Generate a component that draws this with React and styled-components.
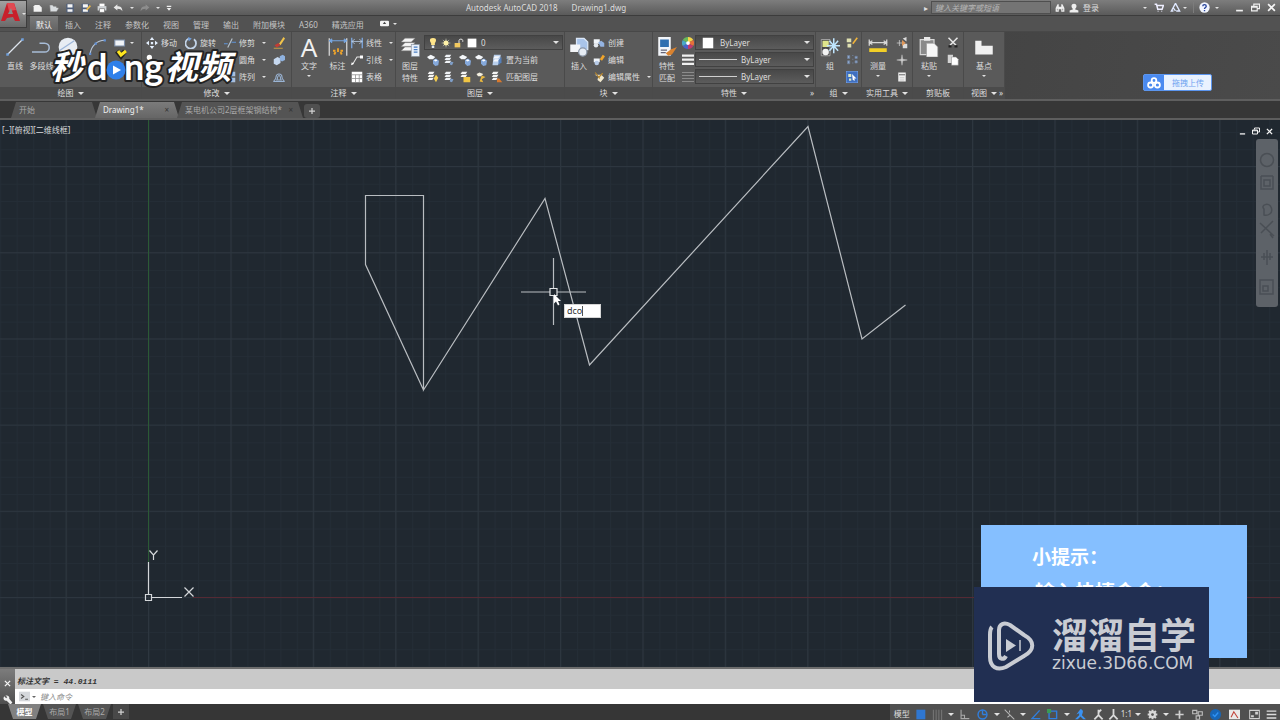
import React from "react";
import styled, { createGlobalStyle, css } from "styled-components";

// ICONS (16 x 16 box)
const glyphs = {
  newFile: <path d="M3 3h7l4 4v7H1V5z" fill="#f2f2f2" />,
  open: <path d="M1 3h5l1 2h5v2l4 1-4 6H2z" fill="#d9dde0" stroke="#777" />,
  save: (
    <>
      <rect x="2" y="1" width="12" height="14" rx="1" fill="#4f5f7b" />
      <path d="M4 2h8v5H4zM4 10h8v4H4z" fill="#f5f5f5" />
    </>
  ),
  saveAs: (
    <>
      <rect x="1" y="1" width="12" height="14" rx="1" fill="#4f5f7b" />
      <path d="M3 2h8v5H3zM3 10h8v4H3z" fill="#f5f5f5" />
      <path d="M8 10l6-7 2 2-6 7z" fill="#e9b84b" />
    </>
  ),
  print: (
    <>
      <path d="M4 1h8v5H4z" fill="#fff" />
      <path d="M1 5h14v7H1z" fill="#cfd3d6" />
      <path d="M4 9h8v6H4z" fill="#fff" stroke="#666" />
    </>
  ),
  undo: <path d="M1 7l6-5v3c5 0 8 2 8 8-2-3-4-4-8-4v3z" fill="#e6e6e6" />,
  redo: <path d="M15 7L9 2v3c-5 0-8 2-8 8 2-3 4-4 8-4v3z" fill="#8d8d8d" />,
  more: <path d="M2 2h12v3H2zM2 8h12l-6 7z" fill="#eee" />,
  find: <path d="M1 14V8l3-6h2v4h4V2h2l3 6v6h-5v-4H6v4zM3 9v3h1V9zm9 0v3h1V9z" fill="#eee" />,
  user: <path d="M8 1c3 0 4 2 4 4S10 9 9.500 10L15 12v3H1v-3l5.500-2C6 9 4 7 4 5s1-4 4-4z" fill="#eee" />,
  cart: (
    <path d="M1 2h3l2 8h7l2-6H5M6 13h1M12 13h1" fill="none" stroke="#eef" strokeWidth="2.400" />
  ),
  a360: <path d="M8 2L2 13h3M8 2l6 11H9M5 9l3 4" fill="none" stroke="#dfe8ff" strokeWidth="2" />,
  help: (
    <>
      <circle cx="8" cy="8" r="7.500" fill="#f2f6ff" />
      <path d="M5.500 6c0-3 5-3 5 0 0 2-2.500 2-2.500 4M8 11.500v2" fill="none" stroke="#26449a" strokeWidth="2" />
    </>
  ),
  minimize: <path d="M2 12h12v3H2z" fill="#f0f0f0" />,
  restore: (
    <path d="M5 5V2h10v8h-3M1 6h10v8H1zM1 7.500h10" fill="none" stroke="#f0f0f0" strokeWidth="2" />
  ),
  close: <path d="M2 2l12 12M14 2L2 14" stroke="#f5f5f5" strokeWidth="3" />,
  camera: (
    <>
      <rect x="0" y="3" width="16" height="10" rx="2" fill="#f2f2f2" />
      <path d="M5 9l3-4 3 4z" fill="#444" />
    </>
  ),
  line: (
    <>
      <path d="M2 14L14 2" stroke="#dfe6ee" />
      <path d="M1 14h2M13 2h2" stroke="#6fa0dd" strokeWidth="2" />
    </>
  ),
  polyline: (
    <path d="M1 12h9c5 0 5-7 0-7H7M0 12h2M6 5h2" fill="none" stroke="#a8bdd8" strokeWidth="1.200" />
  ),
  circle: (
    <>
      <circle cx="8" cy="8" r="7.500" fill="#e8edf3" />
      <path d="M1 11l12-8" stroke="#9db6da" />
    </>
  ),
  arc: (
    <>
      <path d="M1 14C2 7 7 2 14 2" fill="none" stroke="#b7c6d9" />
      <path d="M0 14h2M5 5h2M13 2h2" stroke="#5f8fd6" strokeWidth="2" />
    </>
  ),
  rect: <path d="M1 4h13v8H1z" fill="#f1f4f8" stroke="#7d8ea8" strokeWidth="1.500" />,
  move: (
    <path d="M8 0l3 4H5zM8 16l-3-4h6zM0 8l4-3v6zM16 8l-4 3V5zM6.500 6.500h3v3h-3z" fill="#e3eefc" />
  ),
  rotate: (
    <>
      <path d="M5 2a7 7 0 1 0 7 1" fill="none" stroke="#c3d4e8" strokeWidth="2.400" />
      <path d="M4 0l5 2-4 4z" fill="#6d9bd8" />
    </>
  ),
  trim: (
    <>
      <path d="M0 9h5M10 7h6" stroke="#5f94d8" strokeWidth="1.600" />
      <path d="M5 14L11 2" stroke="#b9c4cf" strokeWidth="1.400" />
    </>
  ),
  copy: (
    <>
      <circle cx="4.500" cy="4.500" r="3.500" fill="#fff" />
      <circle cx="11" cy="11" r="3.500" fill="#b9c9dc" />
    </>
  ),
  fillet: <path d="M2 2v5c0 4 3 7 7 7h5" fill="none" stroke="#aac5ea" strokeWidth="2" />,
  array: <path d="M1 1h6v6H1zM9 1h6v6H9zM1 9h6v6H1zM9 9h6v6H9z" fill="#a9bfdd" />,
  erase: (
    <>
      <path d="M8 9l6-9 2 2-6 9z" fill="#f1c44b" />
      <path d="M2 11l5-3 3 3-5 3z" fill="#c23d35" />
      <path d="M1 15h12" stroke="#e9b33f" />
    </>
  ),
  explode: (
    <>
      <path d="M1 7l5-3 4 2v6l-5 3-4-2z" fill="#c6d8ef" />
      <path d="M9 3l4-2 3 2v5l-4 2-3-2z" fill="#8fb2df" />
    </>
  ),
  offset: (
    <path d="M1 14c0-2 3-2 3-6a4 4 0 0 1 8 0c0 4 3 4 3 6zM5 12c2-2 0-6 3-6s1 4 3 6z" fill="none" stroke="#9ab4d4" strokeWidth="1.400" />
  ),
  dim: (
    <>
      <path d="M1 1v14M15 1v14" stroke="#d8d8d8" />
      <path d="M1 3h14M1 3l2-1.500v3zM15 3l-2-1.500v3z" stroke="#78a7e2" strokeWidth=".8" fill="#78a7e2" />
      <path d="M5 14l1-2M8 12V9M11 14l-1-2M4 11l2 0M12 11h-2" stroke="#f0a52b" strokeWidth="1.500" />
    </>
  ),
  linear: (
    <>
      <path d="M1 1v14M15 1v14" stroke="#7faeea" strokeWidth="1.600" />
      <path d="M1 6h14M5 3L1 6l4 3M11 3l4 3-4 3" fill="none" stroke="#bcd1ec" />
    </>
  ),
  leader: (
    <>
      <path d="M2 14L8 4h5" fill="none" stroke="#e6e6e6" strokeWidth="1.400" />
      <path d="M0 15l1-4 3 2zM12 2h4v4h-4z" fill="#fff" />
    </>
  ),
  table: (
    <>
      <rect x="1" y="1" width="14" height="14" fill="#fff" />
      <path d="M1 5h14M1 10h14M6 5v10M11 5v10" stroke="#8a8a8a" />
    </>
  ),
  layerProps: (
    <>
      <path d="M4 1h8L9 4H1zM4 4.500h8l-3 3H1zM4 8h8l-3 3H1z" fill="#f5f5f5" stroke="#888" strokeWidth=".4" />
      <rect x="9" y="6" width="6.500" height="9.500" fill="#e9f1fb" stroke="#8a94a3" strokeWidth=".5" />
      <path d="M11 8h3M11 10h3M11 12h3" stroke="#4a7fc4" />
    </>
  ),
  bulb: (
    <>
      <path d="M8 0c7 0 5 6 3 8v3H5V8C3 6 1 0 8 0z" fill="#ffe58a" />
      <path d="M6 12h4v4H6z" fill="#dfe6ee" />
    </>
  ),
  sun: (
    <>
      <path d="M8 1v14M1 8h14M3 3l10 10M13 3L3 13" stroke="#cfd3c0" />
      <circle cx="8" cy="8" r="4" fill="#fff2a8" />
    </>
  ),
  lock: (
    <>
      <rect x="1" y="8" width="9" height="7" fill="#f2c95f" />
      <path d="M8 8V4c0-3 6-3 6 0v2" fill="none" stroke="#e6e6e6" strokeWidth="1.600" />
    </>
  ),
  swatch: <path d="M1 1h14v14H1z" fill="#fff" />,
  layOff: (
    <>
      <path d="M0 4l5-3 6 3-3 3H3z" fill="#f5f8fb" />
      <path d="M8 8l4-2 4 3-1 6-4 1-3-3z" fill="#85a9dc" />
      <path d="M9 8l3-1 2 2-3 1z" fill="#fff" />
    </>
  ),
  layStack: (
    <>
      <path d="M4 1h7L9 4H2zM4 5h7L9 8H2zM4 9h7l-2 3H2z" fill="#f0f3f7" />
      <path d="M10 10l4 1-2 4-3-1z" fill="#7f9fc9" />
    </>
  ),
  layCurrent: (
    <>
      <path d="M4 1h9l-1 9-3 5H2l1-9z" fill="#b9cfec" />
      <path d="M5 3h7L9 6H3zM5 7h6l-2 3H3z" fill="#f6f8fb" />
      <path d="M10 8l4-4v7l-4 4z" fill="#557fb8" />
    </>
  ),
  layLock: (
    <>
      <path d="M4 1h7L9 4H2zM4 5h7L9 8H2z" fill="#f5f5f5" />
      <path d="M6 8h9v7H6z" fill="#f0c544" />
    </>
  ),
  layBulb: (
    <>
      <path d="M3 1h7L8 4H1zM3 5h7L8 8H1zM3 9h6l-2 3H1z" fill="#f5f5f5" />
      <path d="M12 5l3 4-3 6-3-5z" fill="#f6cf52" />
    </>
  ),
  layMatch: (
    <>
      <path d="M3 1h7L8 4H1zM3 5h7L8 8H1zM3 9h6l-2 3H1z" fill="#f5f5f5" />
      <path d="M8 10l3 0 4 5H8z" fill="#d97a2e" />
    </>
  ),
  layFreeze: (
    <>
      <path d="M2 4l4-2 5 2-3 3H4z" fill="#f3efe0" />
      <path d="M9 6l5 2-5 3 2 4-5-1z" fill="#e7b73f" />
    </>
  ),
  insert: (
    <>
      <path d="M6 1h6l3 3v6H6z" fill="#a9c4ea" stroke="#dbe7f7" />
      <path d="M1 6h8v6H1z" fill="#f3f5f8" />
      <circle cx="11" cy="12" r="3.300" fill="#e6ecf4" stroke="#8b97a8" />
    </>
  ),
  create: (
    <>
      <path d="M1 3h8v6H1z" fill="#f0f4f9" />
      <path d="M7 7l4-2 4 3v5h-5z" fill="#94b4e2" />
      <circle cx="4" cy="11" r="3" fill="#e4e9ef" />
    </>
  ),
  edit: (
    <>
      <path d="M1 6h8v5H1z" fill="#f0f4f9" />
      <circle cx="5" cy="12" r="3" fill="#b7cbe8" />
      <path d="M9 7l4-6 3 2-4 6z" fill="#f0a52b" />
    </>
  ),
  editAttr: (
    <>
      <path d="M2 5l5 2-1 5 4 3 5-6-4-4z" fill="#efe7cd" />
      <path d="M3 2l6 8M13 3l-6 6" stroke="#b8862b" strokeWidth="1.600" />
    </>
  ),
  matchProps: (
    <>
      <rect x="1" y="0" width="10" height="15" fill="#f2f5f9" />
      <rect x="2.500" y="2" width="7" height="6" fill="#2f6fb0" />
      <path d="M3 10.500h5M3 12.500h4" stroke="#667" />
      <path d="M7 13l4-3 5-2-4 6-3 1z" fill="#d9822f" />
    </>
  ),
  wheel: (
    <>
      <path d="M8 8V0a8 8 0 0 1 7 4z" fill="#f4d64a" />
      <path d="M8 8l7-4a8 8 0 0 1 0 8z" fill="#e8703a" />
      <path d="M8 8l7 4a8 8 0 0 1-7 4z" fill="#c1396f" />
      <path d="M8 8v8a8 8 0 0 1-7-4z" fill="#4a62c9" />
      <path d="M8 8l-7 4a8 8 0 0 1 0-8z" fill="#49a8c9" />
      <path d="M8 8L1 4a8 8 0 0 1 7-4z" fill="#68b85a" />
      <circle cx="8" cy="8" r="2.500" fill="#fff" />
    </>
  ),
  weights: <path d="M0 2h16M0 7.500h16M0 13h16" stroke="#f0f0f0" strokeWidth="3" />,
  types: <path d="M0 2h16M0 6h16M0 10h16M0 14h16" stroke="#8c8c8c" strokeWidth="1.500" />,
  group: (
    <>
      <path d="M1 2h7v13H1z" fill="#4a4a4a" stroke="#b9b9b9" strokeWidth=".6" />
      <rect x="2" y="3" width="5" height="5" fill="#dfe58c" />
      <circle cx="4.500" cy="12" r="2.600" fill="#f3f3f3" />
      <path d="M11 1v12M5.500 7h10.500M7.500 3l7 8M14.500 3l-7 8" stroke="#bfe6ff" strokeWidth="1.200" />
    </>
  ),
  ungroup: (
    <>
      <path d="M1 2h6v5H1zM2 9h5v5H2z" fill="#dfe0b0" />
      <path d="M9 9l6-8" stroke="#f0b43b" strokeWidth="2" />
    </>
  ),
  groupEdit: (
    <path d="M2 2h3v4H2zM2 9h3v4H2zM8 2h2M8 7h2M8 12h2M12 3h3v3h-3zM12 9h3v3h-3z" fill="#8fa9cf" stroke="#6d7f99" />
  ),
  groupSel: (
    <>
      <path d="M0 0h16v16H0z" fill="#3f6fc0" stroke="#8db4ee" />
      <path d="M3 4h4v4H3zM4 10h3v3H4z" fill="#dce9c8" />
      <path d="M8 4l6 6-3 0 1 3-3-1z" fill="#fff" />
    </>
  ),
  measure: (
    <>
      <path d="M1 2v5M15 2v5M1 4.500h14M3.500 3L1 4.500 3.500 6M12.500 3L15 4.500 12.500 6" fill="none" stroke="#d7d7d7" />
      <rect x="1" y="9" width="14" height="3" fill="#f2cf27" />
    </>
  ),
  quick: (
    <>
      <path d="M1 8h7M4.500 4v8" stroke="#d0d0d0" />
      <path d="M9 2l5-2v6zM9 9h6v6H9z" fill="#dcdcdc" />
      <path d="M8 4l5 4-5 4z" fill="#e0985a" />
    </>
  ),
  point: <path d="M8 1l1 6 6 1-6 1-1 6-1-6-6-1 6-1z" fill="#d5d5d5" stroke="#c5c5c5" strokeWidth=".6" />,
  calc: (
    <>
      <rect x="3" y="2" width="10" height="12" fill="#f0f0f0" />
      <path d="M4 5h8" stroke="#777" strokeWidth="1.500" />
      <path d="M5 9h6M5 12h6" stroke="#bbb" />
    </>
  ),
  paste: (
    <>
      <path d="M1 2h11v12H1z" fill="#8a8a8a" stroke="#d7d7d7" />
      <path d="M4 0h5v3H4z" fill="#e8e8e8" />
      <path d="M6 5h6l3 3v8H6z" fill="#f6f6f6" stroke="#999" strokeWidth=".5" />
    </>
  ),
  cut: (
    <>
      <path d="M2 1l10 10M14 1L4 11" stroke="#e8e8e8" strokeWidth="2" />
      <path d="M2 11h4v3H2zM10 11h4v3h-4z" fill="#222" />
    </>
  ),
  copyClip: (
    <>
      <path d="M1 1h7v11H1z" fill="#d4d4d4" />
      <path d="M6 4h6l3 3v8H6z" fill="#fff" stroke="#888" strokeWidth=".7" />
    </>
  ),
  base: <path d="M1 3h5v4h9v7H1z" fill="#f0f0f0" />,
  wrench: <path d="M2 2l3 3 2-2-3-2c4-1 7 2 6 5l5 6-3 3-6-6c-3 1-6-2-5-5z" fill="#f0f0f0" />,
  prompt: (
    <>
      <rect x="0" y="1" width="16" height="14" fill="#d5d8dc" />
      <path d="M3 5l4 3-4 3M9 12h4" fill="none" stroke="#555" strokeWidth="1.600" />
    </>
  ),
  snap: <path d="M2 1h13v14H2z" fill="#2f77d2" />,
  gridDots: <path d="M2 1v15M6 1v15M10 1v15M14 1v15" stroke="#777" strokeWidth="1.500" />,
  ortho: <path d="M3 1v13h12M3 9h5v5" fill="none" stroke="#a9a9a9" strokeWidth="1.600" />,
  polar: (
    <>
      <circle cx="8" cy="8" r="6.500" fill="none" stroke="#2f7fe0" strokeWidth="2" />
      <path d="M8 8V2M8 8h6" stroke="#2f7fe0" strokeWidth="2" />
    </>
  ),
  iso: <path d="M1 1l14 14M8 2v3M5 12l4-3" stroke="#b5b5b5" strokeWidth="1.500" />,
  track: <path d="M14 2L3 14h12M2 14h2" fill="none" stroke="#2f7fe0" strokeWidth="2" />,
  osnap: (
    <>
      <path d="M3 3h11v11H3z" fill="none" stroke="#2f7fe0" strokeWidth="2" />
      <path d="M0 0h6v6H0z" fill="#3b9a54" />
    </>
  ),
  annoOn: <path d="M8 0a4 4 0 0 1 3 6l-1 3 6 6h-4l-4-4-4 4H0l6-6V6L2 8z" fill="#3a92f2" />,
  anno: <path d="M8 1v8l6 6M8 9l-6 6M8 5l4-4" fill="none" stroke="#dadada" strokeWidth="2.600" />,
  annoScale: <path d="M8 0v9l6 6M8 9l-6 6" fill="none" stroke="#dadada" strokeWidth="2.600" />,
  gear: (
    <>
      <path d="M8 1v14M1 8h14M3 3l10 10M13 3L3 13" stroke="#d8d8d8" strokeWidth="3" />
      <circle cx="8" cy="8" r="5" fill="#d8d8d8" />
      <circle cx="8" cy="8" r="2" fill="#555" />
    </>
  ),
  isolate: <path d="M1 2h6v5H1zM9 4h6v5H9zM6 10h5v5H6z" fill="none" stroke="#bdbdbd" strokeWidth="1.600" />,
  hardware: (
    <>
      <circle cx="8" cy="8" r="8" fill="#1766b8" />
      <path d="M4 8l3 3 5-6" fill="none" stroke="#2f92f5" strokeWidth="2" />
    </>
  ),
  clean: (
    <>
      <path d="M0 1h16v14H0z" fill="#e9e9e9" />
      <path d="M3 12l4-8 6 9" fill="none" stroke="#c1433a" strokeWidth="1.600" />
    </>
  ),
  full: (
    <>
      <path d="M1 2h14v12H1z" fill="none" stroke="#d0d0d0" strokeWidth="1.500" />
      <path d="M9 4h4v4H9zM3 9h4v3H3z" fill="#d0d0d0" />
    </>
  ),
  menu: <path d="M1 3h14M1 8h14M1 13h14" stroke="#dcdcdc" strokeWidth="2" />,
  plus: <path d="M8 2v12M2 8h12" stroke="#d0d0d0" strokeWidth="2.500" />,
};

function Icon({ name, size = 12 }) {
  return (
    <svg width={size} height={size} viewBox="0 0 16 16" aria-hidden="true">
      {glyphs[name]}
    </svg>
  );
}

// DATA
const menuTabs = ["默认", "插入", "注释", "参数化", "视图", "管理", "输出", "附加模块", "A360", "精选应用"];

const modifyTools = [
  { width: 39, items: [["move", "移动"], ["copy"]] },
  { width: 39, items: [["rotate", "旋转"]] },
  { width: 42, caret: true, items: [["trim", "修剪"], ["fillet", "圆角"], ["array", "阵列"]] },
];

const statusTools = [
  ["snap", 17], ["gridDots", 17], ["caret", 10], ["ortho", 18], ["polar", 18], ["caret", 10],
  ["iso", 16], ["caret", 10], ["track", 16], ["osnap", 18], ["caret", 10], ["annoOn", 18],
  ["anno", 17], ["annoScale", 14],
];

const statusToolsEnd = [
  ["gear", 18], ["caret", 10], ["plus", 17], ["isolate", 18], ["hardware", 18], ["clean", 20],
  ["full", 20], ["menu", 14],
];

// PARTS OF THE RIBBON
function BigTool({ icon, labels = [], width, size = 20, caret }) {
  return (
    <BigButton type="button" aria-label={labels.length ? undefined : icon} $width={width}>
      <BigIcon>
        <Icon name={icon} size={size} />
      </BigIcon>
      {labels.map((label) => (
        <span key={label}>{label}</span>
      ))}
      {caret && <Caret />}
    </BigButton>
  );
}

function SmallTool({ icon, label, caret }) {
  return (
    <SmallButton type="button" aria-label={label || icon}>
      <Icon name={icon} size={12} />
      {label && <span>{label}</span>}
      {caret && <Caret $push />}
    </SmallButton>
  );
}

function Panel({ title, width, caret = true, launcher, children }) {
  return (
    <PanelBox $width={width}>
      <PanelBody>{children}</PanelBody>
      <PanelTitle>
        <PanelName>
          {title}
          {caret && <Caret $big />}
        </PanelName>
        {launcher && <Launcher>»</Launcher>}
      </PanelTitle>
    </PanelBox>
  );
}

function PropertySelect({ label, line }) {
  return (
    <SelectBox $wide={!line}>
      {line ? <SampleLine /> : <Icon name="swatch" size={12} />}
      <select aria-label={label} defaultValue="ByLayer">
        <option>ByLayer</option>
      </select>
      <Caret $big />
    </SelectBox>
  );
}

function Ribbon() {
  return (
    <RibbonBar>
      <Panel title="绘图" width={142}>
        <Column $width={2} />
        <BigTool icon="line" labels={["直线"]} width={26} />
        <BigTool icon="polyline" labels={["多段线"]} width={27} />
        <BigTool icon="circle" width={26} />
        <BigTool icon="arc" size={18} width={33} />
        <Column $width={20}>
          <SmallTool icon="rect" caret />
        </Column>
      </Panel>

      <Panel title="修改" width={150}>
        <Column $width={4} />
        {modifyTools.map((col) => (
          <Column key={col.items[0][0]} $width={col.width}>
            {col.items.map(([icon, label]) => (
              <SmallTool key={icon} icon={icon} label={label} caret={col.caret} />
            ))}
          </Column>
        ))}
        <Column $width={26} $center>
          <SmallTool icon="erase" />
          <SmallTool icon="explode" />
          <SmallTool icon="offset" />
        </Column>
      </Panel>

      <Panel title="注释" width={104}>
        <Column $width={2} />
        <BigButton type="button" $width={30}>
          <BigIcon>
            <LetterA>A</LetterA>
          </BigIcon>
          <span>文字</span>
          <Caret />
        </BigButton>
        <BigTool icon="dim" labels={["标注"]} width={27} />
        <Column $width={42}>
          <SmallTool icon="linear" label="线性" caret />
          <SmallTool icon="leader" label="引线" caret />
          <SmallTool icon="table" label="表格" />
        </Column>
      </Panel>

      <Panel title="图层" width={169}>
        <BigTool icon="layerProps" labels={["图层", "特性"]} width={28} />
        <Column $width={139}>
          <SelectBox>
            <Icon name="bulb" size={10} />
            <Icon name="sun" size={10} />
            <Icon name="lock" size={10} />
            <Icon name="swatch" size={10} />
            <select aria-label="图层" defaultValue="0">
              <option>0</option>
            </select>
            <Caret $big />
          </SelectBox>
          <LayerRow>
            <SmallTool icon="layOff" />
            <SmallTool icon="layStack" />
            <SmallTool icon="layOff" />
            <SmallTool icon="layOff" />
            <SmallTool icon="layCurrent" label="置为当前" />
          </LayerRow>
          <LayerRow>
            <SmallTool icon="layBulb" />
            <SmallTool icon="layStack" />
            <SmallTool icon="layLock" />
            <SmallTool icon="layFreeze" />
            <SmallTool icon="layMatch" label="匹配图层" />
          </LayerRow>
        </Column>
      </Panel>

      <Panel title="块" width={88}>
        <BigTool icon="insert" labels={["插入"]} width={28} />
        <Column $width={58}>
          <SmallTool icon="create" label="创建" />
          <SmallTool icon="edit" label="编辑" />
          <SmallTool icon="editAttr" label="编辑属性" caret />
        </Column>
      </Panel>

      <Panel title="特性" width={163} launcher>
        <BigTool icon="matchProps" labels={["特性", "匹配"]} width={28} />
        <Column $width={14} $center>
          <SmallTool icon="wheel" />
          <SmallTool icon="weights" />
          <SmallTool icon="types" />
        </Column>
        <Column $width={119}>
          <PropertySelect label="颜色" />
          <PropertySelect label="线宽" line />
          <PropertySelect label="线型" line />
        </Column>
      </Panel>

      <Panel title="组" width={46}>
        <BigTool icon="group" labels={["组"]} width={28} />
        <Column $width={16} $center>
          <SmallTool icon="ungroup" />
          <SmallTool icon="groupEdit" />
          <SmallTool icon="groupSel" />
        </Column>
      </Panel>

      <Panel title="实用工具" width={51}>
        <BigTool icon="measure" labels={["测量"]} width={32} caret />
        <Column $width={16} $center>
          <SmallTool icon="quick" />
          <SmallTool icon="point" />
          <SmallTool icon="calc" />
        </Column>
      </Panel>

      <Panel title="剪贴板" width={51} caret={false}>
        <BigTool icon="paste" labels={["粘贴"]} width={32} caret />
        <Column $width={16} $center>
          <SmallTool icon="cut" />
          <SmallTool icon="copyClip" />
        </Column>
      </Panel>

      <Panel title="视图" width={41} launcher>
        <BigTool icon="base" labels={["基点"]} width={40} caret />
      </Panel>
    </RibbonBar>
  );
}

function Drawing() {
  return (
    <svg className="drawing" width="100%" height="100%" aria-hidden="true">
      <defs>
        <pattern id="minor" x="148.500" y="477.500" width="16.480" height="17.240" patternUnits="userSpaceOnUse">
          <path d="M0 .5H17M.5 0V18" stroke="#242d36" fill="none" />
        </pattern>
        <pattern id="major" x="148" y="477" width="82.400" height="86.200" patternUnits="userSpaceOnUse">
          <path d="M0 .5H83M.5 0V87" stroke="#2d363f" fill="none" />
        </pattern>
      </defs>
      <rect width="100%" height="100%" fill="url(#minor)" />
      <rect width="100%" height="100%" fill="url(#major)" />
      <path d="M148.500 0V442" stroke="#2b5a35" />
      <rect x="193" y="477" width="100%" height="1" fill="#552a34" />
      <g fill="none" stroke="#b9bdc1" strokeWidth="1.200">
        <path d="M423.500 270L365.500 144.500V75.500H423.500V270L545 78.500L589.500 245L808 6.500L862 219L905.500 185" />
        <path d="M521 172H550M557 172H586M553.500 138V168.500M553.500 175.500V205" />
        <path d="M550 168.500h7v7h-7z" stroke="#e3e5e7" />
        <path d="M148.500 442V474M152 477.500H182M145.500 474.500h6v6h-6z" stroke="#d4d7da" />
        <path d="M149.500 430.500l4 4.500v5M157.500 430.500l-4 4.500M184.500 467.500l9 9M193.500 467.500l-9 9" stroke="#d4d7da" />
      </g>
      <path d="M554 174v9.500l2-2 2 4 1.500-1-1.500-3.500h3z" fill="#fff" />
    </svg>
  );
}

export default function App() {
  return (
    <Screen>
      <GlobalStyle />
      <Header>
        <AppButton type="button" aria-label="A">
          <svg width="22" height="24" viewBox="0 0 22 24" aria-hidden="true">
            <path d="M1 19L7 1h7l6 18h-5l-2-4-6 1-2 3z" fill="#c8202b" />
            <path d="M7 1h7l2 7-7 1z" fill="#e04a52" />
            <path d="M8 12l3-6 2 6z" fill="#8a8a8a" />
          </svg>
          <Caret />
        </AppButton>
        <TitleBar>
          <QuickTools>
            {["newFile", "open", "save", "saveAs", "print", "undo"].map((name) => (
              <IconButton key={name} type="button" aria-label={name} $width={16}>
                <Icon name={name} size={10} />
              </IconButton>
            ))}
            <Caret $cell />
            <IconButton type="button" aria-label="redo" $width={14}>
              <Icon name="redo" size={10} />
            </IconButton>
            <Caret $cell />
            <IconButton type="button" aria-label="more" $width={10}>
              <Icon name="more" size={6} />
            </IconButton>
          </QuickTools>
          <Title>
            <span>Autodesk AutoCAD 2018</span>
            <span>Drawing1.dwg</span>
          </Title>
          <TitleRight>
            <Launcher>▸</Launcher>
            <input aria-label="搜索" placeholder="键入关键字或短语" />
            <IconButton type="button" aria-label="find" $width={18}>
              <Icon name="find" size={10} />
            </IconButton>
            <Login type="button">
              <Icon name="user" size={10} />
              登录
            </Login>
            <Caret $cell />
            <IconButton type="button" aria-label="cart" $width={16}>
              <Icon name="cart" size={10} />
            </IconButton>
            <IconButton type="button" aria-label="a360" $width={16}>
              <Icon name="a360" size={11} />
            </IconButton>
            <Caret />
            <HelpButton type="button" aria-label="help">
              <Icon name="help" size={11} />
              <Caret />
            </HelpButton>
            {["minimize", "restore", "close"].map((name) => (
              <IconButton key={name} type="button" aria-label={name} $width={16}>
                <Icon name={name} size={9} />
              </IconButton>
            ))}
          </TitleRight>
        </TitleBar>
        <MenuTabs>
          {menuTabs.map((tab, i) => (
            <MenuTab key={tab} type="button" $active={i === 0}>
              {tab}
            </MenuTab>
          ))}
          <IconButton type="button" aria-label="camera" $width={36}>
            <Icon name="camera" size={9} />
            <Caret />
          </IconButton>
        </MenuTabs>
      </Header>

      <Ribbon />

      <FileTabs>
        <FileTab type="button" $width={86}>
          <span>开始</span>
        </FileTab>
        <FileTab type="button" $width={84} $active>
          <span>Drawing1*</span>
          <i>×</i>
        </FileTab>
        <FileTab type="button" $width={126}>
          <span>某电机公司2层框架钢结构*</span>
          <i>×</i>
        </FileTab>
        <AddTab type="button" aria-label="新图形">
          <Icon name="plus" size={8} />
        </AddTab>
      </FileTabs>

      <Canvas>
        <Drawing />
        <ViewLabel>[−][俯视][二维线框]</ViewLabel>
        <ViewControls>
          <Icon name="minimize" size={7} />
          <Icon name="restore" size={8} />
          <Icon name="close" size={7} />
        </ViewControls>
        <NavBar>
          <svg width="16" height="160" viewBox="0 0 16 160" fill="none" stroke="#4a4f55" strokeWidth="1.500">
            <circle cx="8" cy="17" r="6.500" />
            <path d="M2 33h12M2 33v13h12V33M5 37h6v6H5z" />
            <path d="M5 66c-4-4 5-7 7-2 3 7-4 9-7 8z" />
            <path d="M1 80l14 13M14 78L2 90M11 91l3 4" />
            <path d="M2 114h12M8 107v15M5 110v7M11 110v7" />
            <path d="M1 137h13v14H1zM4 143h5v5H4z" />
          </svg>
        </NavBar>
        <DynamicInput>
          <input aria-label="命令" defaultValue="dco" />
        </DynamicInput>
      </Canvas>

      <Command>
        <CommandSide>
          <Icon name="close" size={7} />
          <Icon name="wrench" size={10} />
        </CommandSide>
        <CommandMain>
          <History>标注文字 = 44.0111</History>
          <Prompt>
            <Icon name="prompt" size={11} />
            <Caret $dark />
            <input aria-label="键入命令" placeholder="键入命令" />
          </Prompt>
        </CommandMain>
      </Command>

      <StatusBar>
        <LayoutTab type="button" $active>模型</LayoutTab>
        <LayoutTab type="button">布局1</LayoutTab>
        <LayoutTab type="button">布局2</LayoutTab>
        <AddLayout type="button" aria-label="新布局">
          <Icon name="plus" size={8} />
        </AddLayout>
        <StatusTools>
          <StatusText type="button">模型</StatusText>
          {statusTools.map(([name, width], i) => (
            <IconButton key={i} type="button" aria-label={name} $width={width}>
              {name === "caret" ? <Caret $big /> : <Icon name={name} size={11} />}
            </IconButton>
          ))}
          <StatusText type="button">
            1:1
            <Caret $big />
          </StatusText>
          {statusToolsEnd.map(([name, width], i) => (
            <IconButton key={i} type="button" aria-label={name} $width={width}>
              {name === "caret" ? <Caret $big /> : <Icon name={name} size={11} />}
            </IconButton>
          ))}
        </StatusTools>
      </StatusBar>

      <VideoLogo>
        <svg width="194" height="48" viewBox="0 0 194 48">
          <g className="word">
            <text x="4" y="34" className="han">秒</text>
            <text x="41" y="35">d</text>
            <text x="78" y="35">ng</text>
            <text x="119" y="34" className="han">视频</text>
          </g>
          <circle cx="70" cy="25" r="9.500" fill="#2f80ea" />
          <path d="M67 20.500l8 4.500-8 4.500z" fill="#fff" />
          <path d="M71 6l4 5 4-5" fill="none" stroke="#222" strokeWidth="5" />
          <path d="M72 6l3 4 5-4" fill="none" stroke="#ffe61f" strokeWidth="3" />
        </svg>
      </VideoLogo>

      <UploadButton type="button">
        <span>
          <svg width="14" height="12" viewBox="0 0 14 12" fill="none" stroke="#fff" strokeWidth="1.800">
            <circle cx="7" cy="3.500" r="2.300" />
            <circle cx="3.600" cy="8" r="2.500" />
            <circle cx="10.400" cy="8" r="2.500" />
          </svg>
        </span>
        拖拽上传
      </UploadButton>

      <Tip>
        <p>小提示：</p>
        <p>输入快捷命令：</p>
      </Tip>

      <SiteLogo>
        <svg width="48" height="52" viewBox="0 0 48 52" fill="none" stroke="#c9ccd3" strokeWidth="4">
          <path d="M4 8C2 10 2 12 2 16V38C2 48 9 52 18 48L36 37C47 31 47 22 36 16L22 6C16 3 11 5 11 11V35C11 41 16 41 18 37" />
          <path d="M18 20v13l10-6.500z" fill="#c9ccd3" stroke="none" />
          <path d="M32 21v11" strokeWidth="1.500" />
        </svg>
        <div>
          <strong>溜溜自学</strong>
          <span>zixue.3D66.COM</span>
        </div>
      </SiteLogo>
    </Screen>
  );
}

// STYLED COMPONENTS
const GlobalStyle = createGlobalStyle`
  * {
    box-sizing: border-box;
  }
  body {
    margin: 0;
    background: #363636;
  }
  button, input, select {
    font: inherit;
    color: inherit;
    margin: 0;
    padding: 0;
    border: 0;
    background: none;
    line-height: inherit;
  }
  button {
    cursor: pointer;
    white-space: nowrap;
  }
  svg {
    display: block;
    flex: none;
  }
`;

const Screen = styled.div`
  position: relative;
  display: flex;
  flex-direction: column;
  height: 100vh;
  overflow: hidden;
  font-family: "Noto Sans", "Noto Sans CJK SC", sans-serif;
  font-size: 8px;
  line-height: 12px;
  color: #dedede;
`;

const Caret = styled.i`
  flex: none;
  width: 0;
  height: 0;
  border: 2px solid transparent;
  border-top-color: ${(props) => (props.$dark ? "#666" : "#e2e2e2")};
  border-bottom: 0;
  ${(props) =>
    props.$big &&
    css`
      border-width: 3px 3px 0;
    `}
  ${(props) =>
    props.$push &&
    css`
      margin-left: auto;
    `}
  ${(props) =>
    props.$cell &&
    css`
      margin: 0 4px;
    `}
`;

const Launcher = styled.span`
  font-size: 8px;
`;

const IconButton = styled.button`
  flex: none;
  display: flex;
  align-items: center;
  justify-content: center;
  gap: 4px;
  width: ${(props) => props.$width}px;
`;

const Header = styled.header`
  display: grid;
  grid-template-columns: 27px 1fr;
  grid-template-rows: 16px 15px;
  background: #525252;
`;

const AppButton = styled.button`
  grid-row: 1 / 3;
  height: 28px;
  display: flex;
  align-items: center;
  border: 1px solid #3d3d3d;
  border-left: 0;
  background: linear-gradient(#a2a2a2, #6a6a6a);
  overflow: hidden;
`;

const TitleBar = styled.div`
  display: flex;
  align-items: center;
  background: linear-gradient(#7d7d7d, #5a5a5a);
  border-bottom: 1px solid #3c3c3c;
`;

const QuickTools = styled.div`
  flex: 0 1 439px;
  display: flex;
  align-items: center;
  padding-left: 3px;
`;

const Title = styled.div`
  display: flex;
  gap: 14px;
  white-space: nowrap;
`;

const TitleRight = styled.div`
  display: flex;
  align-items: center;
  margin-left: auto;
  padding-right: 1px;

  input {
    width: 120px;
    height: 13px;
    margin-left: 3px;
    padding-left: 3px;
    border: 1px solid #4f4f4f;
    background: #747474;
  }
  input::placeholder {
    color: #b4b4b4;
    font-style: italic;
  }
`;

const Login = styled.button`
  display: flex;
  align-items: center;
  gap: 4px;
  width: 70px;
`;

const HelpButton = styled.button`
  display: flex;
  align-items: center;
  gap: 5px;
  width: 38px;
  margin-left: 6px;
  padding-left: 5px;
  border-left: 1px solid #7c7c7c;
`;

const MenuTabs = styled.nav`
  display: flex;
  align-items: stretch;
  padding-left: 3px;
`;

const MenuTab = styled.button`
  padding: 2px 7px 0;
  color: #c4c4c4;
  ${(props) =>
    props.$active &&
    css`
      padding: 2px 6px 0;
      color: #f4f4f4;
      background: linear-gradient(#7a7a7a, #636363);
    `}
`;

const RibbonBar = styled.section`
  display: flex;
  height: 70px;
  background: linear-gradient(100deg, #454545, #404040 60%, #4a4a4a);
  border-top: 1px solid #484848;
  border-bottom: 2px solid #5f5f5f;
`;

const PanelBox = styled.div`
  flex: none;
  display: flex;
  flex-direction: column;
  width: ${(props) => props.$width}px;
  background: #5a5a5a;
  border-right: 1px solid #4a4a4a;
`;

const PanelBody = styled.div`
  flex: 1;
  display: flex;
  padding-top: 2px;
`;

const PanelTitle = styled.div`
  display: grid;
  grid-template-columns: 1fr auto 1fr;
  align-items: center;
  height: 12px;
  background: #4b4b4b;
  white-space: nowrap;

  ${Launcher} {
    justify-self: end;
    padding-right: 1px;
  }
`;

const PanelName = styled.span`
  grid-column: 2;
  display: flex;
  align-items: center;
  gap: 4px;
`;

const Column = styled.div`
  flex: none;
  display: flex;
  flex-direction: column;
  align-items: ${(props) => (props.$center ? "center" : "stretch")};
  width: ${(props) => props.$width}px;
`;

const BigButton = styled.button`
  flex: none;
  display: flex;
  flex-direction: column;
  align-items: center;
  width: ${(props) => props.$width}px;

  > i {
    margin-top: 3px;
  }
`;

const BigIcon = styled.span`
  display: flex;
  align-items: center;
  justify-content: center;
  height: 26px;
`;

const LetterA = styled.span`
  font-size: 26px;
  line-height: 26px;
  color: #f0f0f0;
`;

const SmallButton = styled.button`
  display: flex;
  align-items: center;
  gap: 3px;
  height: 17px;
`;

const LayerRow = styled.div`
  display: flex;
  gap: 4px;
  padding-left: 3px;
`;

const SelectBox = styled.div`
  display: flex;
  align-items: center;
  gap: 3px;
  height: 15px;
  margin: 1px 0;
  padding: 0 3px 0 ${(props) => (props.$wide ? 6 : 3)}px;
  background: linear-gradient(#484848, #5c5c5c);
  border: 1px solid #414141;

  select {
    flex: 1;
    min-width: 0;
    appearance: none;
    padding-left: ${(props) => (props.$wide ? 3 : 1)}px;
    outline: 0;
  }
`;

const SampleLine = styled.span`
  width: 38px;
  height: 1px;
  background: #d0d0d0;
`;

const FileTabs = styled.nav`
  display: flex;
  align-items: flex-end;
  height: 19px;
  padding-left: 11px;
  background: #373737;
  border-bottom: 2px solid #5e5e5e;
`;

const FileTab = styled.button`
  display: flex;
  align-items: center;
  justify-content: space-between;
  width: ${(props) => props.$width}px;
  height: 16px;
  margin-right: -2px;
  padding: 0 10px 0 8px;
  color: #a8a8a8;
  background: #545454;
  clip-path: polygon(5px 0, calc(100% - 5px) 0, 100% 100%, 0 100%);
  ${(props) =>
    props.$active &&
    css`
      color: #f0f0f0;
      background: linear-gradient(#7b7b7b, #666);
    `}

  i {
    font-style: normal;
    color: #333;
  }
`;

const AddTab = styled.button`
  display: flex;
  align-items: center;
  justify-content: center;
  width: 16px;
  height: 14px;
  margin-left: 3px;
  border-radius: 3px;
  background: #505050;
`;

const Canvas = styled.main`
  position: relative;
  flex: 1;
  min-height: 0;
  background: #202830;
  overflow: hidden;

  .drawing {
    position: absolute;
    inset: 0;
  }
`;

const ViewLabel = styled.div`
  position: absolute;
  left: 2px;
  top: 4px;
  color: #d8dadc;
`;

const ViewControls = styled.div`
  position: absolute;
  right: 7px;
  top: 7px;
  display: flex;
  align-items: center;
  gap: 6px;
`;

const NavBar = styled.div`
  position: absolute;
  right: 2px;
  top: 19px;
  width: 22px;
  padding: 4px 3px;
  border-radius: 3px;
  background: #5d6268;
`;

const DynamicInput = styled.div`
  position: absolute;
  left: 564px;
  top: 184px;
  display: flex;
  align-items: center;
  width: 37px;
  height: 14px;
  padding-left: 2px;
  color: #333;
  background: #fff;
  border: 1px solid #d5d5d5;

  input {
    width: 16px;
    height: 10px;
    font-size: 9px;
    border-right: 1px solid #555;
  }
`;

const Command = styled.section`
  display: flex;
  height: 37px;
  border-top: 2px solid #6d6d6d;
`;

const CommandSide = styled.div`
  flex: none;
  display: flex;
  flex-direction: column;
  align-items: center;
  gap: 8px;
  width: 15px;
  padding-top: 11px;
  background: linear-gradient(#7c7c7c, #4f4f4f);
`;

const CommandMain = styled.div`
  flex: 1;
  display: flex;
  flex-direction: column;
`;

const History = styled.div`
  flex: 1;
  padding: 7px 2px 0;
  font-family: "Liberation Mono", "Noto Sans CJK SC", monospace;
  font-style: italic;
  font-weight: bold;
  color: #333;
  background: #c9c9c9;
`;

const Prompt = styled.div`
  display: flex;
  align-items: center;
  gap: 2px;
  height: 15px;
  padding-left: 4px;
  background: #fff;

  input {
    flex: 1;
    padding-left: 2px;
    color: #333;
  }
  input::placeholder {
    color: #8d8d8d;
    font-style: italic;
  }
`;

const StatusBar = styled.footer`
  display: flex;
  align-items: stretch;
  height: 16px;
  padding-left: 8px;
  background: #363636;
`;

const LayoutTab = styled.button`
  width: 33px;
  height: 15px;
  margin-right: 2px;
  color: #aaa;
  background: #545454;
  clip-path: polygon(0 0, 100% 0, calc(100% - 5px) 100%, 5px 100%);
  ${(props) =>
    props.$active &&
    css`
      color: #fff;
      font-weight: bold;
      background: #808080;
    `}
`;

const AddLayout = styled.button`
  width: 16px;
  height: 15px;
  padding-left: 4px;
  background: #484848;
`;

const StatusTools = styled.div`
  display: flex;
  align-items: center;
  margin-left: auto;
  padding: 4px 2px 0 4px;
  background: #505050;
`;

const StatusText = styled.button`
  display: flex;
  align-items: center;
  gap: 3px;
  margin-right: 2px;
`;

const VideoLogo = styled.div`
  position: absolute;
  left: 46px;
  top: 45px;

  .word {
    font-family: Lato, sans-serif;
    font-size: 36px;
    font-weight: 700;
    fill: #fff;
    stroke: #222;
    stroke-width: 4px;
    stroke-linejoin: round;
    paint-order: stroke;
  }
  .han {
    font-family: "Noto Sans CJK SC", sans-serif;
    font-size: 33px;
    font-style: italic;
  }
`;

const UploadButton = styled.button`
  position: absolute;
  right: 68px;
  top: 74px;
  display: flex;
  align-items: center;
  gap: 8px;
  width: 69px;
  height: 17px;
  border: 1px solid #5b95ee;
  border-radius: 2px;
  color: #6ea3f0;
  background: #e9f2ff;

  span {
    display: flex;
    align-items: center;
    justify-content: center;
    width: 20px;
    height: 15px;
    background: #4a8af0;
  }
`;

const Tip = styled.aside`
  position: absolute;
  right: 33px;
  bottom: 62px;
  width: 266px;
  height: 133px;
  padding: 14px 51px;
  color: #fff;
  background: #85bfff;

  p {
    margin: 0;
    font-size: 19px;
    line-height: 36px;
    font-weight: 700;
    white-space: nowrap;
  }
  p + p {
    padding-left: 3px;
    font-size: 20px;
  }
`;

const SiteLogo = styled.div`
  position: absolute;
  right: 71px;
  bottom: 18px;
  display: flex;
  align-items: center;
  gap: 16px;
  width: 235px;
  height: 115px;
  padding-left: 14px;
  color: #c9ccd3;
  background: #212f52;

  div {
    display: flex;
    flex-direction: column;
  }
  strong {
    font-size: 36px;
    line-height: 36px;
    font-weight: 700;
  }
  span {
    font-family: "DejaVu Sans", sans-serif;
    font-size: 17px;
    line-height: 18px;
  }
`;
